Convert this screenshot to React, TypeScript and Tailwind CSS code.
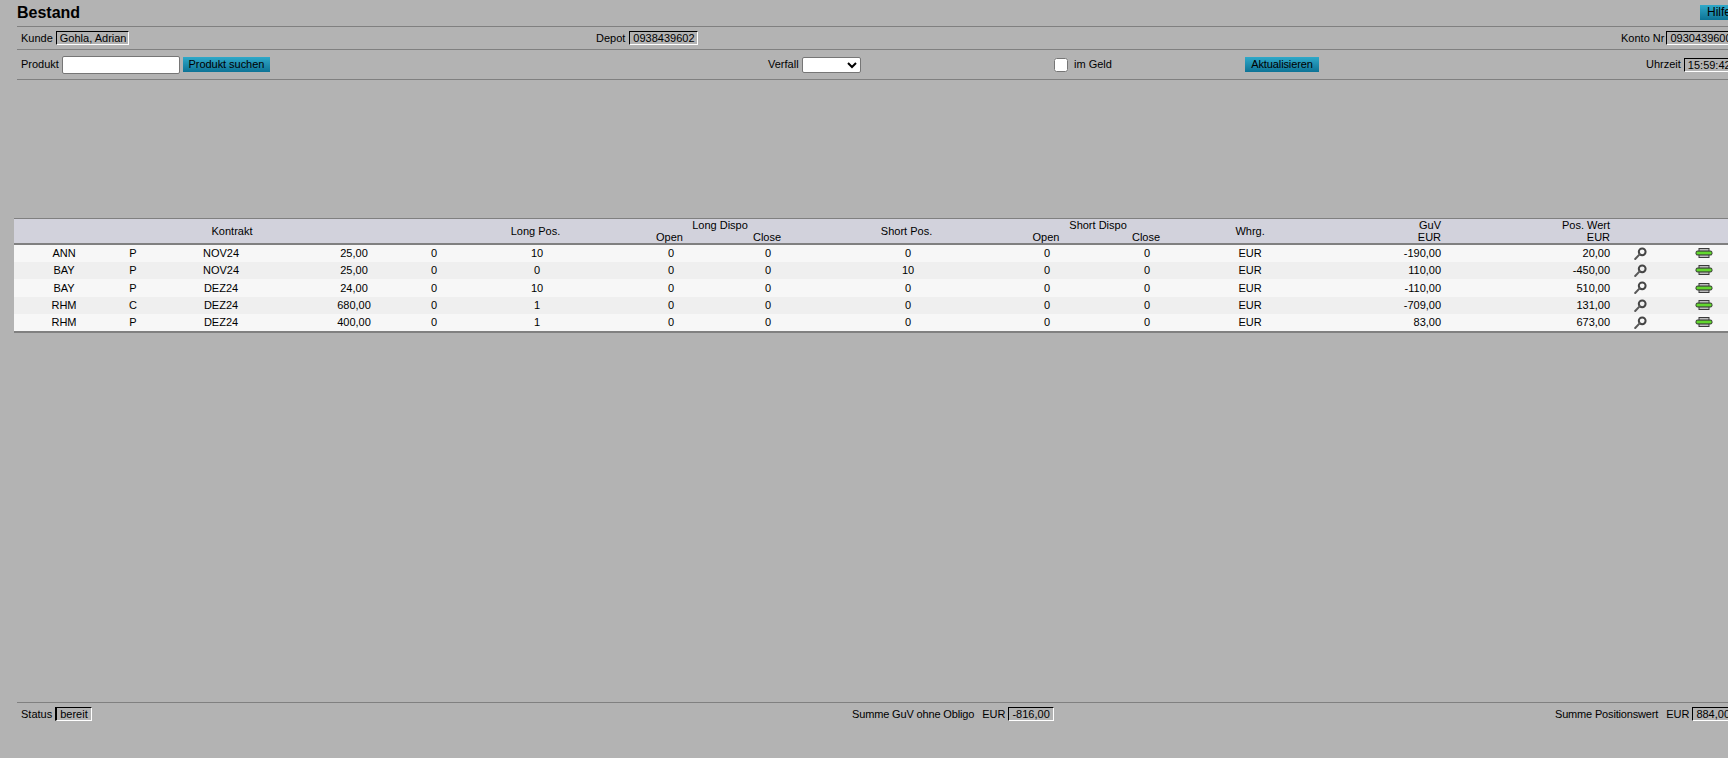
import React from "react";

const Box = ({ children, className = "" }: { children: React.ReactNode; className?: string }) => (
  <span className={`inline-block h-[14px] border-t border-l border-t-black border-l-black border-r border-b border-r-white border-b-white px-[3px] leading-[12px] whitespace-nowrap ${className}`}>
    {children}
  </span>
);

const Btn = ({ children, className = "" }: { children: React.ReactNode; className?: string }) => (
  <button className={`h-[15px] bg-gradient-to-b from-[#2fa9c9] to-[#0c7396] text-center leading-[15px] text-black ${className}`}>
    {children}
  </button>
);

const Lens = () => (
  <svg width="13" height="13" viewBox="0 0 13 13" className="mx-auto block">
    <circle cx="8.2" cy="4.8" r="3.4" fill="none" stroke="#454545" strokeWidth="2" />
    <path d="M5.6 7.4 L1.2 12" stroke="#5a5a5a" strokeWidth="2" strokeLinecap="round" />
  </svg>
);

const Ticket = () => (
  <svg width="18" height="10" viewBox="0 0 18 10" className="mx-auto block">
    <rect x="4" y="0.5" width="10" height="9" fill="#bcbcbc" stroke="#3a3a3a" />
    <rect x="0.5" y="2.5" width="17" height="5" rx="2.2" fill="#3a3a3a" />
    <rect x="1.5" y="3.6" width="15" height="2.8" fill="#62d82e" />
  </svg>
);

const rows = [
  ["ANN", "P", "NOV24", "25,00", "0", "10", "0", "0", "0", "0", "0", "EUR", "-190,00", "20,00"],
  ["BAY", "P", "NOV24", "25,00", "0", "0", "0", "0", "10", "0", "0", "EUR", "110,00", "-450,00"],
  ["BAY", "P", "DEZ24", "24,00", "0", "10", "0", "0", "0", "0", "0", "EUR", "-110,00", "510,00"],
  ["RHM", "C", "DEZ24", "680,00", "0", "1", "0", "0", "0", "0", "0", "EUR", "-709,00", "131,00"],
  ["RHM", "P", "DEZ24", "400,00", "0", "1", "0", "0", "0", "0", "0", "EUR", "83,00", "673,00"],
];

const rowClass = ["h-[18px]", "h-[17px]", "h-[18px]", "h-[17px]", "h-[18px]"];

const widths = [100, 38, 138, 128, 32, 174, 94, 100, 180, 98, 102, 104, 141, 169, 56, 72];

export default function App() {
  return (
    <div className="flex h-screen w-full flex-col overflow-hidden bg-[#b3b3b3] font-['Liberation_Sans',Arial,sans-serif] text-[11px] text-black">
      <div className="ml-[17px] w-[1740px] shrink-0">
        <div className="relative h-[27px] border-b border-[#808080]">
          <h1 className="text-[16px] font-bold leading-[25px]">Bestand</h1>
          <Btn className="absolute left-[1683px] top-[5px] w-[40px] pl-[7px] text-left text-[12px]">Hilfe</Btn>
        </div>
        <div className="grid h-[23px] grid-cols-[575px_1025px_1fr] items-center border-b border-[#808080] pl-[4px]">
          <div className="flex items-center gap-[3px]"><span>Kunde</span><Box className="pr-[2px]">Gohla, Adrian</Box></div>
          <div className="flex items-center gap-[4px]"><span>Depot</span><Box className="pr-[2px]">0938439602</Box></div>
          <div className="flex items-center gap-[2px]"><span>Konto Nr</span><Box>0930439600</Box></div>
        </div>
        <div className="grid h-[30px] grid-cols-[747px_286px_191px_402px_1fr] items-center border-b border-[#808080] pl-[4px]">
          <div className="flex items-center">
            <span>Produkt</span>
            <input type="text" className="ml-[3px] h-[18px] w-[118px] rounded-[2px] border border-[#767676] bg-white" />
            <Btn className="ml-[3px] w-[87px] tracking-[-0.05px]">Produkt suchen</Btn>
          </div>
          <div className="flex items-center">
            <span>Verfall</span>
            <select className="ml-[3px] h-[16px] w-[59px] rounded-[2px] border border-[#767676] bg-white text-[11px]">
              <option></option>
            </select>
          </div>
          <div className="flex items-center">
            <input type="checkbox" className="m-0 h-[14px] w-[14px]" />
            <span className="ml-[6px]">im Geld</span>
          </div>
          <div><Btn className="w-[74px] tracking-[-0.1px]">Aktualisieren</Btn></div>
          <div className="-ml-[1px] flex items-center gap-[3px]"><span>Uhrzeit</span><Box>15:59:42</Box></div>
        </div>
      </div>

      <table className="ml-[14px] mt-[138px] w-[1726px] shrink-0 table-fixed border-collapse text-center leading-[12px]">
        <colgroup>
          {widths.map((w, i) => (
            <col key={i} style={{ width: w }} />
          ))}
        </colgroup>
        <thead className="bg-[#d2d2dc]">
          <tr className="h-[13px] border-t border-[#808080]">
            <th rowSpan={2} colSpan={5} className="font-normal">Kontrakt</th>
            <th rowSpan={2} className="pr-[3px] font-normal">Long Pos.</th>
            <th colSpan={2} className="pr-[2px] font-normal">Long Dispo</th>
            <th rowSpan={2} className="pr-[3px] font-normal">Short Pos.</th>
            <th colSpan={2} className="font-normal">Short Dispo</th>
            <th rowSpan={2} className="font-normal">Whrg.</th>
            <th className="pr-[2px] text-right font-normal">GuV</th>
            <th className="pr-[2px] text-right font-normal">Pos. Wert</th>
            <th rowSpan={2} colSpan={2}></th>
          </tr>
          <tr className="h-[11px] border-b-2 border-[#808080] leading-[11px]">
            <th className="pr-[3px] font-normal">Open</th>
            <th className="pr-[2px] font-normal">Close</th>
            <th className="pr-[2px] font-normal">Open</th>
            <th className="pr-[2px] font-normal">Close</th>
            <th className="pr-[2px] text-right font-normal">EUR</th>
            <th className="pr-[2px] text-right font-normal">EUR</th>
          </tr>
        </thead>
        <tbody className="border-b-2 border-[#808080]">
          {rows.map((r, i) => (
            <tr key={i} className={`${rowClass[i]} ${i % 2 === 0 ? "bg-[#f7f7f7]" : "bg-[#efefef]"}`}>
              {r.map((c, j) => (
                <td key={j} className={j >= 12 ? "pr-[2px] text-right" : ""}>{c}</td>
              ))}
              <td><Lens /></td>
              <td><Ticket /></td>
            </tr>
          ))}
        </tbody>
      </table>

      <div className="ml-[17px] mt-auto h-[56px] w-[1740px] shrink-0 border-t border-[#808080] pl-[4px]">
        <div className="grid h-[22px] grid-cols-[831px_703px_1fr] items-center">
          <div className="flex items-center gap-[3px]"><span>Status</span><Box className="border-l-2 px-[2px]">bereit</Box></div>
          <div className="flex items-center"><span className="tracking-[-0.15px]">Summe GuV ohne Obligo</span><span className="ml-[8px]">EUR</span><Box className="ml-[3px]">-816,00</Box></div>
          <div className="flex items-center"><span className="tracking-[-0.17px]">Summe Positionswert</span><span className="ml-[8px]">EUR</span><Box className="ml-[3px]">884,00</Box></div>
        </div>
      </div>
    </div>
  );
}
